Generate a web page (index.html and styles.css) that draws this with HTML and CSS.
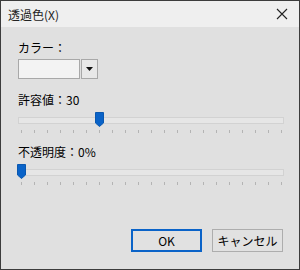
FILE: index.html
```html
<!DOCTYPE html>
<html lang="ja">
<head>
  <meta charset="UTF-8">
  <title>透過色</title>
  <link rel="stylesheet" href="styles.css">
</head>
<body>
  <div class="dialog">
    <div class="title-bar">
      <span class="title">透過色(X)</span>
      <button class="close-btn" aria-label="閉じる">
        <svg width="12" height="12" viewBox="0 0 12 12"><path d="M1 1L11 11M11 1L1 11" stroke="#222" stroke-width="1.1" fill="none"/></svg>
      </button>
    </div>
    <div class="content">
      <div class="label">カラー：</div>
      <div class="combo">
        <div class="combo-field"></div>
        <div class="combo-arrow">
          <svg width="7" height="4" viewBox="0 0 7 4"><path d="M0 0H7L3.5 4Z" fill="#111"/></svg>
        </div>
      </div>

      <div class="label label-gap">許容値：30</div>
      <div class="slider" data-value="30"></div>

      <div class="label label-gap2">不透明度：0%</div>
      <div class="slider" data-value="0"></div>

      <div class="buttons">
        <button class="btn btn-default">OK</button>
        <button class="btn">キャンセル</button>
      </div>
    </div>
  </div>

  <script>
    // スライダーの目盛りとつまみを描く
    document.querySelectorAll('.slider').forEach(el => {
      const value = Number(el.dataset.value);
      const track = document.createElement('div');
      track.className = 'track';
      const thumb = document.createElement('div');
      thumb.className = 'thumb';
      thumb.style.left = (value * 2.6) + 'px';
      thumb.innerHTML = '<svg width="9" height="15" viewBox="0 0 9 15"><path d="M0.5 0.5H8.5V11L4.5 14.5L0.5 11Z" fill="#0a63c8" stroke="#0a58b0" stroke-width="1"/></svg>';
      const ticks = document.createElement('div');
      ticks.className = 'ticks';
      for (let i = 0; i <= 20; i++) {
        const t = document.createElement('span');
        ticks.appendChild(t);
      }
      el.appendChild(track);
      el.appendChild(thumb);
      el.appendChild(ticks);
    });
  </script>
</body>
</html>
```

FILE: styles.css
```css
body {
  margin: 0;
  font-family: "Noto Sans CJK JP", "Liberation Sans", sans-serif;
  font-size: 12px;
  color: #000;
  background: #e0e0e0;
}
.dialog {
  width: 298px;
  height: 268px;
  border: 1px solid #3c3c3c;
  background: #e0e0e0;
  display: flex;
  flex-direction: column;
}
.title-bar {
  height: 26px;
  background: #efefef;
  display: flex;
  align-items: center;
  justify-content: space-between;
  padding-left: 7px;
}
.title { font-size: 12px; color: #222; }
.close-btn {
  width: 30px; height: 26px;
  border: none; background: none; padding: 0;
  display: flex; align-items: center; justify-content: center;
  margin-right: 2px;
}
.content {
  flex: 1;
  padding: 12px 16px 0 17px;
  position: relative;
}
.label { height: 18px; line-height: 18px; }
.label-gap { margin-top: 12px; }
.label-gap2 { margin-top: 2px; }
.combo {
  display: flex;
  width: 80px;
  height: 20px;
  margin-top: 2px;
}
.combo-field {
  width: 60px;
  border: 1px solid #a8a8a8;
  background: #f3f3f3;
}
.combo-arrow {
  width: 15px;
  margin-left: 1px;
  border: 1px solid #a8a8a8;
  background: #e8e8e8;
  display: flex; align-items: center; justify-content: center;
}
.slider {
  position: relative;
  height: 32px;
  width: 266px;
}
.track {
  position: absolute;
  left: 0; top: 8px;
  width: 264px; height: 5px;
  background: #e6e6e6;
  border: 1px solid #d2d2d2;
}
.thumb {
  position: absolute;
  top: 3px;
  margin-left: -1px;
  height: 15px;
}
.ticks {
  position: absolute;
  left: 3px; top: 21px;
  width: 261px;
  display: flex;
  justify-content: space-between;
}
.ticks span {
  width: 1px; height: 3px;
  background: #b4b4b4;
}
.buttons {
  position: absolute;
  right: 16px; bottom: 17px;
  display: flex;
  gap: 10px;
}
.btn {
  width: 71px; height: 23px;
  font-family: inherit; font-size: 12px;
  background: #e1e1e1;
  border: 1px solid #adadad;
  padding: 0;
}
.btn-default {
  border: 2px solid #0a63c8;
}
```
